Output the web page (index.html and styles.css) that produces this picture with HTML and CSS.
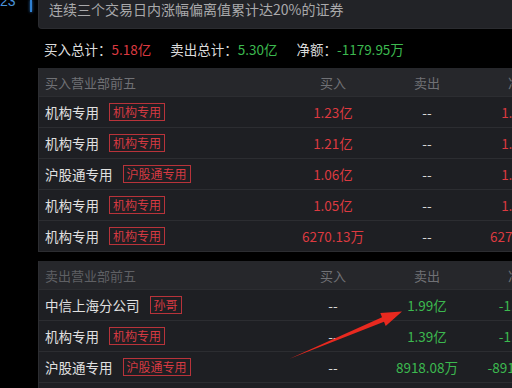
FILE: index.html
```html
<!DOCTYPE html>
<html lang="zh">
<head>
<meta charset="utf-8">
<link rel="stylesheet" href="styles.css">
</head>
<body>
<div class="page">
  <div class="marker"><span class="marker-num">23</span><span class="marker-line"></span></div>
  <div class="main">
    <div class="desc">连续三个交易日内涨幅偏离值累计达20%的证券</div>
    <div class="summary">
      <span class="item">买入总计：<span class="red">5.18亿</span></span>
      <span class="item">卖出总计：<span class="green">5.30亿</span></span>
      <span class="item">净额：<span class="green">-1179.95万</span></span>
    </div>

    <div class="table">
      <div class="row head">
        <div class="c-name">买入营业部前五</div>
        <div class="c-num">买入</div>
        <div class="c-num">卖出</div>
        <div class="c-num">净额</div>
      </div>
      <div class="row">
        <div class="c-name">机构专用<span class="tag">机构专用</span></div>
        <div class="c-num red">1.23亿</div>
        <div class="c-num">--</div>
        <div class="c-num red">1.23亿</div>
      </div>
      <div class="row">
        <div class="c-name">机构专用<span class="tag">机构专用</span></div>
        <div class="c-num red">1.21亿</div>
        <div class="c-num">--</div>
        <div class="c-num red">1.21亿</div>
      </div>
      <div class="row">
        <div class="c-name">沪股通专用<span class="tag">沪股通专用</span></div>
        <div class="c-num red">1.06亿</div>
        <div class="c-num">--</div>
        <div class="c-num red">1.06亿</div>
      </div>
      <div class="row">
        <div class="c-name">机构专用<span class="tag">机构专用</span></div>
        <div class="c-num red">1.05亿</div>
        <div class="c-num">--</div>
        <div class="c-num red">1.05亿</div>
      </div>
      <div class="row">
        <div class="c-name">机构专用<span class="tag">机构专用</span></div>
        <div class="c-num red">6270.13万</div>
        <div class="c-num">--</div>
        <div class="c-num red">6270.13万</div>
      </div>
    </div>

    <div class="table second">
      <div class="row head">
        <div class="c-name dim">卖出营业部前五</div>
        <div class="c-num">买入</div>
        <div class="c-num">卖出</div>
        <div class="c-num">净额</div>
      </div>
      <div class="row">
        <div class="c-name">中信上海分公司<span class="tag">孙哥</span></div>
        <div class="c-num">--</div>
        <div class="c-num green">1.99亿</div>
        <div class="c-num green">-1.99亿</div>
      </div>
      <div class="row">
        <div class="c-name">机构专用<span class="tag">机构专用</span></div>
        <div class="c-num">--</div>
        <div class="c-num green">1.39亿</div>
        <div class="c-num green">-1.39亿</div>
      </div>
      <div class="row">
        <div class="c-name">沪股通专用<span class="tag">沪股通专用</span></div>
        <div class="c-num">--</div>
        <div class="c-num green">8918.08万</div>
        <div class="c-num green">-8918.08万</div>
      </div>
      <div class="row">
        <div class="c-name">机构专用<span class="tag">机构专用</span></div>
        <div class="c-num">--</div>
        <div class="c-num green">8000.00万</div>
        <div class="c-num green">-8000.00万</div>
      </div>
    </div>
  </div>
  <svg class="arrow" width="512" height="388" viewBox="0 0 512 388">
    <polygon points="289,359 382,317.2 380.3,313 402,311.5 385.7,326 384,321.8" fill="#e8291f"/>
  </svg>
</div>
</body>
</html>
```
FILE: styles.css
```css
html, body {
  margin: 0;
  padding: 0;
  background: #000;
  width: 512px;
  height: 388px;
  overflow: hidden;
}
body {
  font-family: "Noto Sans CJK SC", "Noto Sans", sans-serif;
  color: #d8d8d8;
}
.page {
  position: relative;
  width: 512px;
  height: 388px;
  overflow: hidden;
  display: flex;
}
.marker {
  width: 38px;
  flex: none;
  position: relative;
}
.marker-num {
  position: absolute;
  left: 0;
  top: -6px;
  font-family: "Liberation Sans", sans-serif;
  font-size: 14px;
  line-height: 14px;
  color: #4a93da;
}
.marker-line {
  position: absolute;
  left: 30px;
  top: 0;
  width: 2px;
  height: 12px;
  background: #2f7fd0;
  box-shadow: 0 0 3px #2f7fd0;
}
.main {
  width: 560px;
  flex: none;
}
.desc {
  height: 28px;
  background: #222327;
  border: 1px solid #2b2c30;
  border-top: none;
  border-radius: 0 0 0 4px;
  padding-left: 10px;
  font-size: 14px;
  line-height: 18px;
  color: #a9a9ab;
}
.summary {
  height: 39px;
  display: flex;
  align-items: center;
  padding-left: 6px;
  font-size: 13.5px;
  gap: 19px;
  color: #dcdcdc;
}
.red { color: #dc3a40; }
.green { color: #3cb94f; }
.table {
  background: #1e1f23;
  border-left: 1px solid #2c2d31;
}
.table.second {
  margin-top: 9px;
}
.row {
  display: grid;
  grid-template-columns: 247px 94px 94px 94px;
  height: 30px;
  align-items: center;
  border-bottom: 1px solid #2c2d31;
  font-size: 13.5px;
}
.row.head {
  height: 28px;
  background: #26272b;
  color: #707175;
  font-size: 13px;
}
.c-name {
  padding-left: 6px;
  display: flex;
  align-items: center;
  white-space: nowrap;
  color: #e0e0e0;
}
.row.head .c-name { color: #707175; }
.row.head .c-name.dim { color: #5f6064; }
.c-num {
  text-align: center;
  white-space: nowrap;
}
.tag {
  margin-left: 10px;
  border: 1px solid #b8333a;
  color: #d63a42;
  font-size: 12px;
  line-height: 16px;
  padding: 0 3px;
}
.arrow {
  position: absolute;
  left: 0;
  top: 0;
  pointer-events: none;
}
```
